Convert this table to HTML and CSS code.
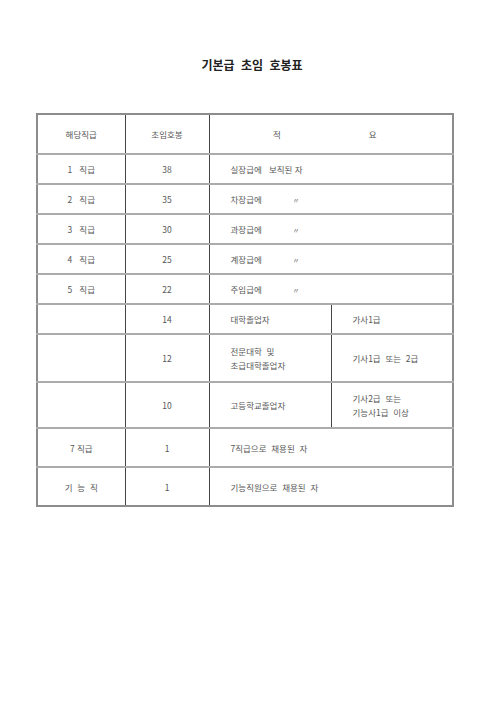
FILE: index.html
```html
<!DOCTYPE html>
<html lang="ko">
<head>
<meta charset="utf-8">
<link rel="stylesheet" href="styles.css">
</head>
<body>
<h1 class="title">기본급 초임 호봉표</h1>
<table class="grid">
  <colgroup>
    <col class="c1"><col class="c2"><col class="c3"><col class="c4">
  </colgroup>
  <tr class="r-head">
    <td class="ctr">해당직급</td>
    <td class="ctr">초임호봉</td>
    <td class="ctr" colspan="2"><span class="spread"><span>적</span><span>요</span></span></td>
  </tr>
  <tr class="r30">
    <td class="ctr">1&nbsp;&nbsp;&nbsp;직급</td>
    <td class="ctr">38</td>
    <td class="txt" colspan="2">실장급에&nbsp;&nbsp;&nbsp;보직된&nbsp;자</td>
  </tr>
  <tr class="r30">
    <td class="ctr">2&nbsp;&nbsp;&nbsp;직급</td>
    <td class="ctr">35</td>
    <td class="txt" colspan="2"><span class="lbl">차장급에</span><span class="ditto">〃</span></td>
  </tr>
  <tr class="r30">
    <td class="ctr">3&nbsp;&nbsp;&nbsp;직급</td>
    <td class="ctr">30</td>
    <td class="txt" colspan="2"><span class="lbl">과장급에</span><span class="ditto">〃</span></td>
  </tr>
  <tr class="r30">
    <td class="ctr">4&nbsp;&nbsp;&nbsp;직급</td>
    <td class="ctr">25</td>
    <td class="txt" colspan="2"><span class="lbl">계장급에</span><span class="ditto">〃</span></td>
  </tr>
  <tr class="r30">
    <td class="ctr">5&nbsp;&nbsp;&nbsp;직급</td>
    <td class="ctr">22</td>
    <td class="txt" colspan="2"><span class="lbl">주임급에</span><span class="ditto">〃</span></td>
  </tr>
  <tr class="r30">
    <td></td>
    <td class="ctr">14</td>
    <td class="txt">대학졸업자</td>
    <td class="txt">가사1급</td>
  </tr>
  <tr class="r48">
    <td></td>
    <td class="ctr">12</td>
    <td class="txt two">전문대학&nbsp;&nbsp;및<br>초급대학졸업자</td>
    <td class="txt">기사1급&nbsp;&nbsp;또는&nbsp;&nbsp;2급</td>
  </tr>
  <tr class="r46">
    <td></td>
    <td class="ctr">10</td>
    <td class="txt">고등학교졸업자</td>
    <td class="txt two">기사2급&nbsp;&nbsp;또는<br>기능사1급&nbsp;&nbsp;이상</td>
  </tr>
  <tr class="r39">
    <td class="ctr">7&nbsp;직급</td>
    <td class="ctr">1</td>
    <td class="txt" colspan="2">7직급으로&nbsp;&nbsp;채용된&nbsp;&nbsp;자</td>
  </tr>
  <tr class="r39">
    <td class="ctr">기&nbsp;&nbsp;능&nbsp;&nbsp;직</td>
    <td class="ctr">1</td>
    <td class="txt" colspan="2">기능직원으로&nbsp;&nbsp;채용된&nbsp;&nbsp;자</td>
  </tr>
</table>
</body>
</html>
```

FILE: styles.css
```css
html, body {
  margin: 0;
  padding: 0;
  background: #ffffff;
}

body {
  font-family: "Noto Sans CJK KR", "Noto Sans", sans-serif;
  color: #585858;
}

.title {
  margin: 0;
  padding: 57px 0 0 0;
  height: 16px;
  line-height: 16px;
  font-size: 12px;
  font-weight: bold;
  color: #222222;
  text-align: center;
  word-spacing: 3px;
  letter-spacing: 0;
}

.grid {
  margin: 40px 0 0 36px;
  width: 418px;
  table-layout: fixed;
  border-collapse: collapse;
  border: 2px solid #8c8c8c;
  font-size: 8.5px;
  line-height: 14px;
}

.c1 { width: 88px; }
.c2 { width: 84px; }
.c3 { width: 122px; }
.c4 { width: 122px; }

.grid td {
  padding: 0;
  border-left: 1px solid #444444;
  border-right: 1px solid #444444;
  border-top: 2px solid #ababab;
  border-bottom: 2px solid #ababab;
  vertical-align: middle;
}

.grid tr:first-child td { border-top: 2px solid #8c8c8c; }
.grid tr:last-child td { border-bottom: 2px solid #8c8c8c; }
.grid td:first-child { border-left: 2px solid #8c8c8c; }
.grid td:last-child { border-right: 2px solid #8c8c8c; }

.r-head { height: 40px; }
.r30 { height: 30px; }
.r48 { height: 48px; }
.r46 { height: 46px; }
.r39 { height: 39px; }

.ctr { text-align: center; }

.txt {
  text-align: left;
  padding-left: 21px !important;
}

.spread {
  display: inline-flex;
  gap: 88px;
  margin-left: -12px;
}

.lbl {
  display: inline-block;
  width: 62px;
}

.ditto {
  font-size: 7px;
}
```
